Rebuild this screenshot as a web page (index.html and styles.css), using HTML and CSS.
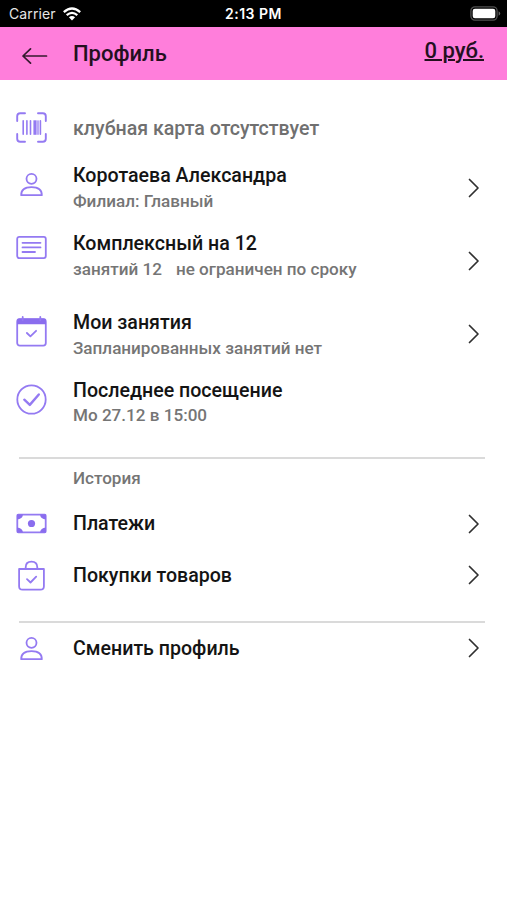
FILE: index.html
```html
<!DOCTYPE html>
<html lang="ru">
<head>
<meta charset="utf-8">
<title>Профиль</title>
<link rel="stylesheet" href="styles.css">
</head>
<body>
<div class="status">
  <div class="carrier"><span>Carrier</span>
    <svg width="18" height="14" viewBox="0 0 18 14" fill="none" stroke="#fff" stroke-width="2.3"><path d="M.8 5.1Q9-2.2 17.2 5.1M3.7 8.2Q9 3.6 14.3 8.2"/><path d="M5.9 10.2Q9 7.8 12.1 10.2L9 13.5Z" fill="#fff" stroke="none"/></svg>
  </div>
  <span class="time">2:13 PM</span>
  <svg class="battery" width="31" height="15" viewBox="0 0 31 15"><rect x=".9" y=".9" width="26.2" height="13.2" rx="4" fill="none" stroke="#505050" stroke-width="1.3"/><rect x="2.7" y="2.7" width="22.6" height="9.6" rx="2.2" fill="#fff"/><path d="M28.6 5.2q1.6.7 1.6 2.3t-1.6 2.3z" fill="#666"/></svg>
</div>
<header class="bar">
  <svg class="back" width="26" height="18" viewBox="0 0 26 18"><path d="M24.500 9H1M8.500 1.800L1 9l7.500 7.200"/></svg>
  <h1>Профиль</h1>
  <a class="balance">0 руб.</a>
</header>
<main>
  <section class="group">
    <div class="row row-card">
      <svg class="icon" viewBox="0 0 31 31"><path stroke-width="1.9" d="M1.200 9V4.200q0-3 3-3H9M22 1.200h4.800q3 0 3 3V9M29.800 22v4.800q0 3-3 3H22M9 29.800H4.200q-3 0-3-3V22"/><path stroke-width="1.600" d="M7.200 8.800v13.500M10.900 8.800v13.500M14.500 8.800v13.500M24.400 8.800v13.500"/><path stroke-width="3.200" stroke-linecap="butt" d="M19 8.300v14.500"/><path stroke-width="1.300" d="M22 8.800v13.500"/></svg>
      <div class="text"><div class="notice">клубная карта отсутствует</div></div>
    </div>
    <div class="row row-user">
      <svg class="icon" viewBox="0 0 31 31"><circle cx="15.500" cy="9.800" r="5"/><path d="M5.200 26.200q-.3-8 10.300-8t10.300 8z"/></svg>
      <div class="text"><div class="title">Коротаева Александра</div><div class="sub">Филиал: Главный</div></div>
      <svg class="chevron" viewBox="0 0 12 20"><path d="M1.500 1.500L10 10l-8.500 8.500"/></svg>
    </div>
    <div class="row row-pass">
      <svg class="icon" viewBox="0 0 31 31"><rect x="1.200" y="4.900" width="28.600" height="21.200" rx="2"/><path d="M6.500 10.800h18M6.500 15.400h18M6.500 20h12.500"/></svg>
      <div class="text"><div class="title">Комплексный на 12</div><div class="sub limits"><span>занятий 12</span><span>не ограничен по сроку</span></div></div>
      <svg class="chevron" viewBox="0 0 12 20"><path d="M1.500 1.500L10 10l-8.500 8.500"/></svg>
    </div>
    <div class="row row-lessons">
      <svg class="icon" viewBox="0 0 31 31"><rect x="1.200" y="3.200" width="28.600" height="26.400" rx="2.500"/><path class="solid" d="M1 8.200V4.600q0-2 2-2h25q2 0 2 2v3.600z"/><path d="M6.700 1v3M24.300 1v3M10.900 17l3.500 3.400 5.700-5.600"/></svg>
      <div class="text"><div class="title">Мои занятия</div><div class="sub">Запланированных занятий нет</div></div>
      <svg class="chevron" viewBox="0 0 12 20"><path d="M1.500 1.500L10 10l-8.500 8.500"/></svg>
    </div>
    <div class="row row-visit">
      <svg class="icon" viewBox="0 0 31 31"><circle cx="15.500" cy="15.500" r="14.200"/><path stroke-width="2.400" d="M8.300 15.700l5.500 5.200 9-10.400"/></svg>
      <div class="text"><div class="title">Последнее посещение</div><div class="sub">Мо 27.12 в 15:00</div></div>
    </div>
  </section>
  <section class="group history">
    <h2 class="sub">История</h2>
    <div class="row row-pay">
      <svg class="icon" viewBox="0 0 31 31"><rect x="1.300" y="6.700" width="28.400" height="17.600" rx="1"/><circle class="solid" cx="15.500" cy="15.500" r="3.600"/><path class="solid" d="M1 6.500h6q-.5 4.500-6 5zM30 6.500h-6q.5 4.500 6 5zM1 24.500h6q-.5-4.500-6-5zM30 24.500h-6q.5-4.500 6-5z"/></svg>
      <div class="text"><div class="title">Платежи</div></div>
      <svg class="chevron" viewBox="0 0 12 20"><path d="M1.500 1.500L10 10l-8.500 8.500"/></svg>
    </div>
    <div class="row row-goods">
      <svg class="icon" viewBox="0 0 31 31"><path d="M3.100 9h24.800v17.200q0 3.500-3.500 3.500H6.600q-3.500 0-3.500-3.500zM9.700 9V7.200q0-5.600 5.800-5.600t5.800 5.600V9M11 19.200l3.500 3.300 5.700-5.900"/></svg>
      <div class="text"><div class="title">Покупки товаров</div></div>
      <svg class="chevron" viewBox="0 0 12 20"><path d="M1.500 1.500L10 10l-8.500 8.500"/></svg>
    </div>
  </section>
  <section class="group">
    <div class="row row-switch">
      <svg class="icon" viewBox="0 0 31 31"><circle cx="15.500" cy="9.800" r="5"/><path d="M5.200 26.200q-.3-8 10.300-8t10.300 8z"/></svg>
      <div class="text"><div class="title">Сменить профиль</div></div>
      <svg class="chevron" viewBox="0 0 12 20"><path d="M1.500 1.500L10 10l-8.500 8.500"/></svg>
    </div>
  </section>
</main>
</body>
</html>
```
FILE: styles.css
```css
* { box-sizing: border-box; }
body { margin: 0; background: #fff; font-family: Roboto, sans-serif; font-weight: 500; color: #141414; }
svg { display: block; }
.status { height: 27px; background: #000; color: #fff; display: grid; grid-template-columns: 1fr auto 1fr; align-items: center; padding: 0 6px 0 9px; font: 500 14px/27px Inter, sans-serif; }
.carrier { display: flex; align-items: center; gap: 7px; font-weight: 400; color: #e6e6e6; letter-spacing: 0.1px; }
.time { font-weight: 600; letter-spacing: 0.5px; margin-left: -3px; }
.battery { justify-self: end; }
.bar { height: 53px; background: #ff7edb; display: flex; padding: 0 23px 0 22px; color: #24101f; }
.back { margin-top: 20px; fill: none; stroke: #351a2e; stroke-width: 1.7; stroke-linecap: round; stroke-linejoin: round; }
.bar h1 { margin: 0 0 0 25px; font-size: 22px; line-height: 53px; font-weight: 500; flex: 1; }
.balance { font-size: 22px; line-height: 48px; text-decoration: underline; text-decoration-thickness: 1.5px; text-underline-offset: 1px; }
main { padding-top: 22px; }
.row { display: grid; grid-template-columns: 31px 1fr 12px; column-gap: 26px; padding: 0 27px 0 16px; }
.icon { width: 31px; height: 31px; fill: none; stroke: #947af2; stroke-width: 1.8; stroke-linecap: round; stroke-linejoin: round; }
.icon .solid { fill: #8a6dee; stroke: none; }
.chevron { width: 12px; height: 20px; align-self: center; fill: none; stroke: #303030; stroke-width: 1.7; stroke-linecap: round; stroke-linejoin: round; }
.title { font-size: 19.6px; line-height: 26px; white-space: nowrap; }
.sub { margin: 0; font-size: 17.1px; line-height: 26px; font-weight: 500; color: #757575; white-space: nowrap; }
.text .sub { margin-top: -1px; }
.notice { font-size: 19.6px; line-height: 53px; color: #707070; white-space: nowrap; }
.text { padding-top: 9px; }
.row-card { height: 52px; }
.row-card .text { padding: 0; }
.row-card .icon { margin-top: 10px; }
.row-user { height: 68px; }
.row-user .icon { margin-top: 15px; }
.row-pass { height: 78px; }
.row-pass .icon { margin-top: 10px; }
.limits { display: flex; gap: 14px; }
.row-lessons { height: 68px; }
.row-lessons .icon { margin-top: 16px; }
.row-lessons .text { padding-top: 10px; }
.row-visit { height: 89px; }
.row-visit .icon { margin-top: 16px; }
.row-visit .text { padding-top: 10px; }
.row-visit .sub { line-height: 25px; }
.group + .group::before { content: ""; display: block; height: 2px; margin: 0 22px 0 19px; background: #dadada; }
.history { height: 164px; }
.history h2 { padding: 6px 0 0 73px; height: 41px; }
.row-pay { height: 48px; }
.row-pay .icon { margin-top: 8px; }
.row-pay .text { padding-top: 11px; }
.row-goods { height: 52px; }
.row-goods .icon { margin-top: 12px; }
.row-goods .text { padding-top: 15px; }
.row-goods .chevron { margin-top: 2px; }
.row-switch { height: 50px; }
.row-switch .icon { margin-top: 10px; }
.row-switch .text { padding-top: 13px; }
```
